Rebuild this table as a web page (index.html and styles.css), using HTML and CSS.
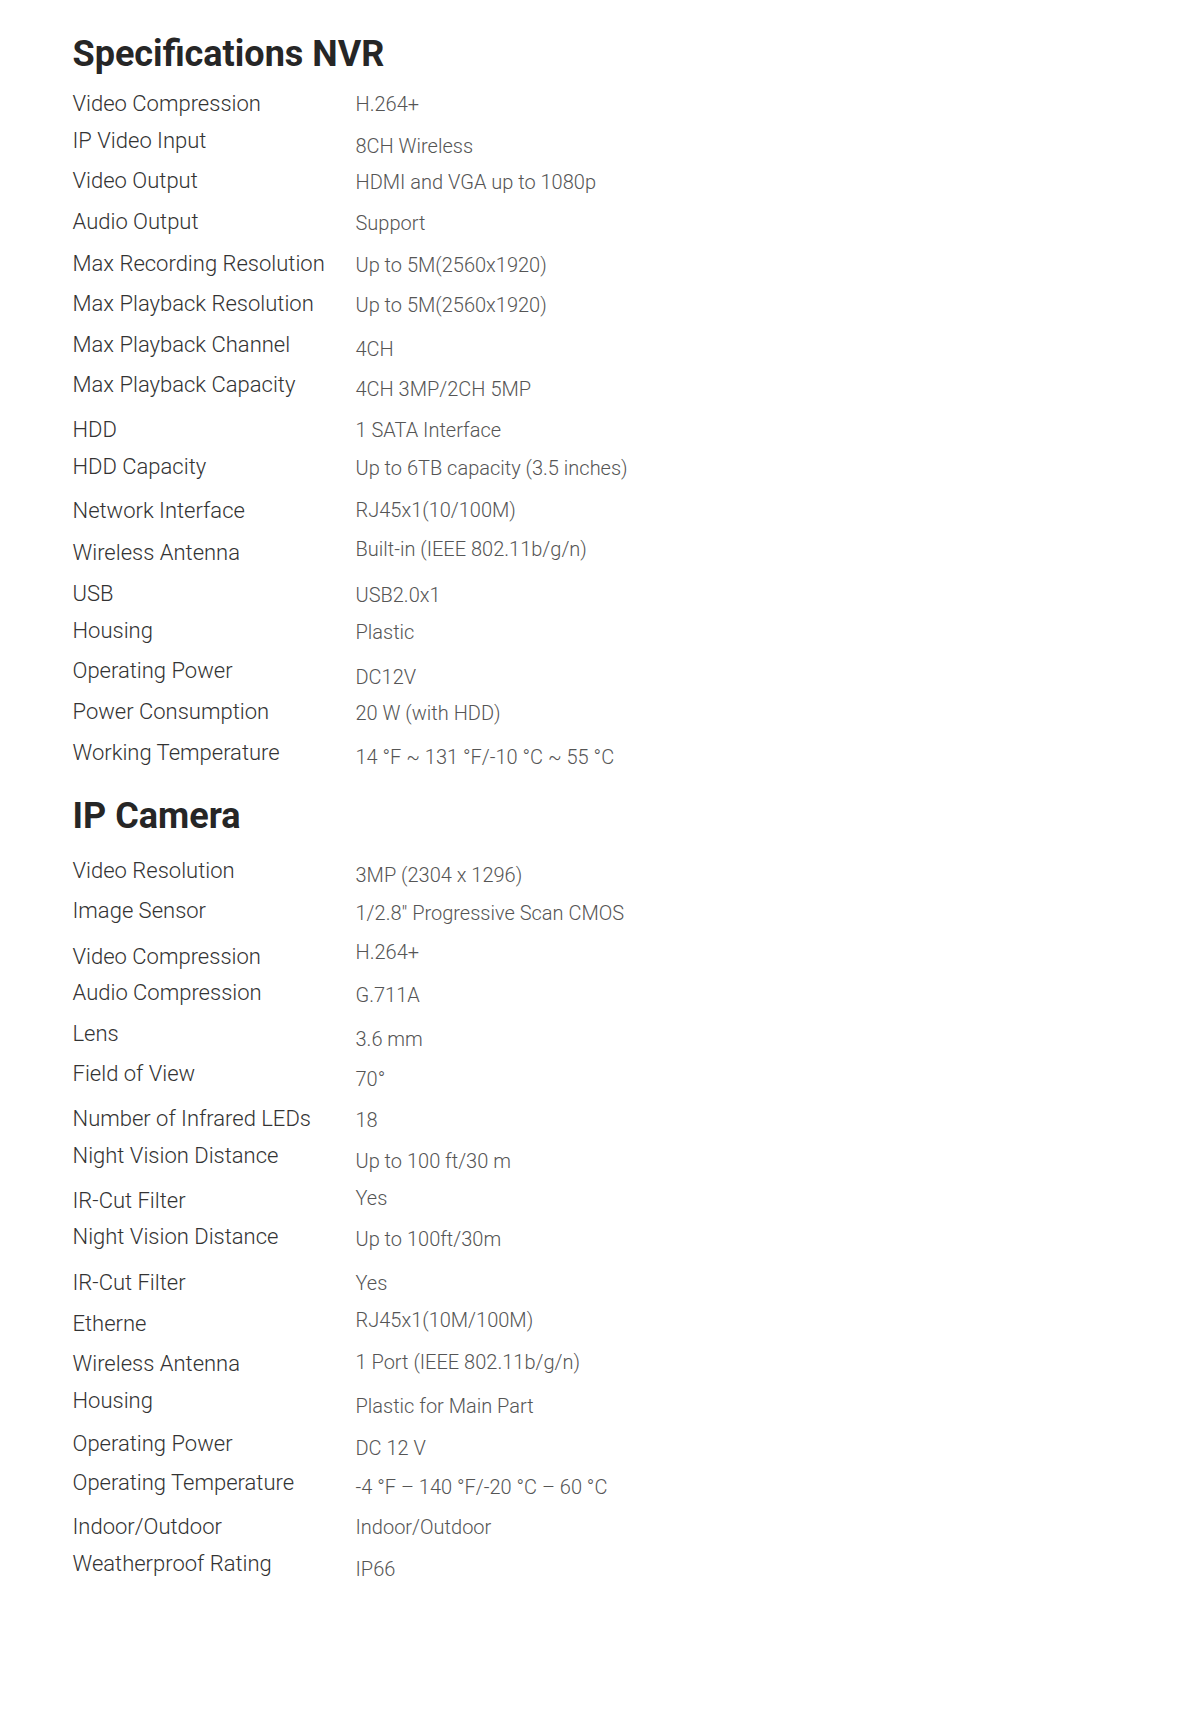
FILE: index.html
```html
<!DOCTYPE html>
<html lang="en">
<head>
<meta charset="utf-8">
<title>Specifications</title>
<link rel="stylesheet" href="styles.css">
</head>
<body>
<main class="page">
  <section class="spec">
    <h2 class="spec-title">Specifications NVR</h2>
    <div class="spec-list">
      <div class="row h37"><span class="label">Video Compression</span><span class="value v0">H.264+</span></div>
      <div class="row h40"><span class="label">IP Video Input</span><span class="value v5">8CH Wireless</span></div>
      <div class="row h41"><span class="label">Video Output</span><span class="value">HDMI and VGA up to 1080p</span></div>
      <div class="row h42"><span class="label">Audio Output</span><span class="value">Support</span></div>
      <div class="row h40"><span class="label">Max Recording Resolution</span><span class="value">Up to 5M(2560x1920)</span></div>
      <div class="row h41"><span class="label">Max Playback Resolution</span><span class="value">Up to 5M(2560x1920)</span></div>
      <div class="row h40"><span class="label">Max Playback Channel</span><span class="value v4">4CH</span></div>
      <div class="row h45"><span class="label">Max Playback Capacity</span><span class="value v4">4CH 3MP/2CH 5MP</span></div>
      <div class="row h37"><span class="label">HDD</span><span class="value v0">1 SATA Interface</span></div>
      <div class="row h44"><span class="label">HDD Capacity</span><span class="value">Up to 6TB capacity (3.5 inches)</span></div>
      <div class="row h42"><span class="label">Network Interface</span><span class="value vm1">RJ45x1(10/100M)</span></div>
      <div class="row h41"><span class="label">Wireless Antenna</span><span class="value vm4">Built-in (IEEE 802.11b/g/n)</span></div>
      <div class="row h37"><span class="label">USB</span><span class="value">USB2.0x1</span></div>
      <div class="row h40"><span class="label">Housing</span><span class="value">Plastic</span></div>
      <div class="row h41"><span class="label">Operating Power</span><span class="value v6">DC12V</span></div>
      <div class="row h41"><span class="label">Power Consumption</span><span class="value">20 W (with HDD)</span></div>
      <div class="row"><span class="label">Working Temperature</span><span class="value v4">14 °F ~ 131 °F/-10 °C ~ 55 °C</span></div>
    </div>
  </section>

  <section class="spec spec-camera">
    <h2 class="spec-title">IP Camera</h2>
    <div class="spec-list">
      <div class="row h40"><span class="label">Video Resolution</span><span class="value v4">3MP (2304 x 1296)</span></div>
      <div class="row h46"><span class="label">Image Sensor</span><span class="value v2">1/2.8" Progressive Scan CMOS</span></div>
      <div class="row h36"><span class="label">Video Compression</span><span class="value vm5">H.264+</span></div>
      <div class="row h41"><span class="label">Audio Compression</span><span class="value v2">G.711A</span></div>
      <div class="row h40"><span class="label">Lens</span><span class="value v5">3.6 mm</span></div>
      <div class="row h45"><span class="label">Field of View</span><span class="value v5">70°</span></div>
      <div class="row h37"><span class="label">Number of Infrared LEDs</span><span class="value">18</span></div>
      <div class="row h45"><span class="label">Night Vision Distance</span><span class="value v5">Up to 100 ft/30 m</span></div>
      <div class="row h36"><span class="label">IR-Cut Filter</span><span class="value vm3">Yes</span></div>
      <div class="row h46"><span class="label">Night Vision Distance</span><span class="value v2">Up to 100ft/30m</span></div>
      <div class="row h41"><span class="label">IR-Cut Filter</span><span class="value v0">Yes</span></div>
      <div class="row h40"><span class="label">Etherne</span><span class="value vm4">RJ45x1(10M/100M)</span></div>
      <div class="row h37"><span class="label">Wireless Antenna</span><span class="value vm2">1 Port (IEEE 802.11b/g/n)</span></div>
      <div class="row h43"><span class="label">Housing</span><span class="value v5">Plastic for Main Part</span></div>
      <div class="row h39"><span class="label">Operating Power</span><span class="value v4">DC 12 V</span></div>
      <div class="row h44"><span class="label">Operating Temperature</span><span class="value v4">-4 °F – 140 °F/-20 °C – 60 °C</span></div>
      <div class="row h37"><span class="label">Indoor/Outdoor</span><span class="value v0">Indoor/Outdoor</span></div>
      <div class="row"><span class="label">Weatherproof Rating</span><span class="value v5">IP66</span></div>
    </div>
  </section>
</main>
</body>
</html>
```

FILE: styles.css
```css
html, body {
  margin: 0;
  padding: 0;
  background: #ffffff;
}

body {
  font-family: Roboto, "Liberation Sans", Arial, sans-serif;
  -webkit-font-smoothing: antialiased;
}

.page {
  padding: 33px 0 0 72.5px;
  min-height: 1693px;
}

.spec-title {
  margin: 0 0 16px 0;
  font-size: 36px;
  line-height: 42px;
  font-weight: 700;
  color: #262626;
}

.spec-camera {
  margin-top: 29px;
}

.spec-camera .spec-title {
  margin-bottom: 21px;
}

.spec-list {
  display: flex;
  flex-direction: column;
}

.row {
  display: grid;
  grid-template-columns: 283px 1fr;
  align-items: start;
  height: 26px;
}

.label {
  font-size: 22px;
  line-height: 26px;
  font-weight: 300;
  color: #333333;
  white-space: nowrap;
}

.value {
  font-size: 20px;
  line-height: 26px;
  font-weight: 300;
  color: #555555;
  white-space: nowrap;
  margin-top: 1px;
}

/* row pitch variants (baseline to next baseline) */
.h36 { height: 36px; }
.h37 { height: 37px; }
.h39 { height: 39px; }
.h40 { height: 40px; }
.h41 { height: 41px; }
.h42 { height: 42px; }
.h43 { height: 43px; }
.h44 { height: 44px; }
.h45 { height: 45px; }
.h46 { height: 46px; }

/* value vertical alignment variants */
.vm5 { margin-top: -5px; }
.vm4 { margin-top: -4px; }
.vm3 { margin-top: -3px; }
.vm2 { margin-top: -2px; }
.vm1 { margin-top: -1px; }
.v0  { margin-top: 0; }
.v2  { margin-top: 2px; }
.v4  { margin-top: 4px; }
.v5  { margin-top: 5px; }
.v6  { margin-top: 6px; }
```
